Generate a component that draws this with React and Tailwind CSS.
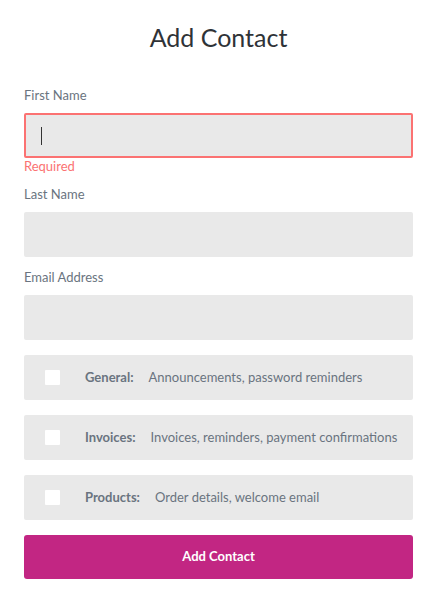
import React from 'react';

const prefs = [
    { name: 'General:', desc: 'Announcements, password reminders' },
    { name: 'Invoices:', desc: 'Invoices, reminders, payment confirmations' },
    { name: 'Products:', desc: 'Order details, welcome email' },
];

export default function App() {
    return (
        <div className="w-[442px] h-[604px] bg-white font-['Lato',_'Open_Sans',_sans-serif]">
            <div className="w-[389px] ml-6 pt-[21px]">
                <h1 className="text-center text-[25px] leading-8 text-[#2f3337]">Add Contact</h1>

                <label className="block mt-[34px] text-[13px] leading-4 text-[#6a7480]">First Name</label>
                <div className="mt-[10px] h-[45px] bg-[#e9e9e9] border-2 border-[#fb7272] rounded-[2px] flex items-center pl-[15px]">
                    <span className="w-px h-[18px] bg-[#333]"></span>
                </div>
                <p className="text-[13px] leading-4 text-[#fb7272]">Required</p>

                <label className="block mt-[12px] text-[13px] leading-4 text-[#6a7480]">Last Name</label>
                <div className="mt-[10px] h-[45px] bg-[#e9e9e9] rounded-[2px]"></div>

                <label className="block mt-[12px] text-[13px] leading-4 text-[#6a7480]">Email Address</label>
                <div className="mt-[10px] h-[45px] bg-[#e9e9e9] rounded-[2px]"></div>

                <div className="mt-[15px] flex flex-col gap-[15px]">
                    {prefs.map((p) => (
                        <div key={p.name} className="h-[45px] bg-[#e9e9e9] rounded-[2px] flex items-center pl-[21px] text-[13px] text-[#6a7480]">
                            <span className="w-[15px] h-[15px] bg-white rounded-[1px]"></span>
                            <span className="ml-[25px] font-bold">{p.name}</span>
                            <span className="ml-[15px]">{p.desc}</span>
                        </div>
                    ))}
                </div>

                <button className="mt-[15px] w-full h-[44px] bg-[#c22683] rounded-[3px] text-white text-[13px] font-bold">
                    Add Contact
                </button>
            </div>
        </div>
    );
}
